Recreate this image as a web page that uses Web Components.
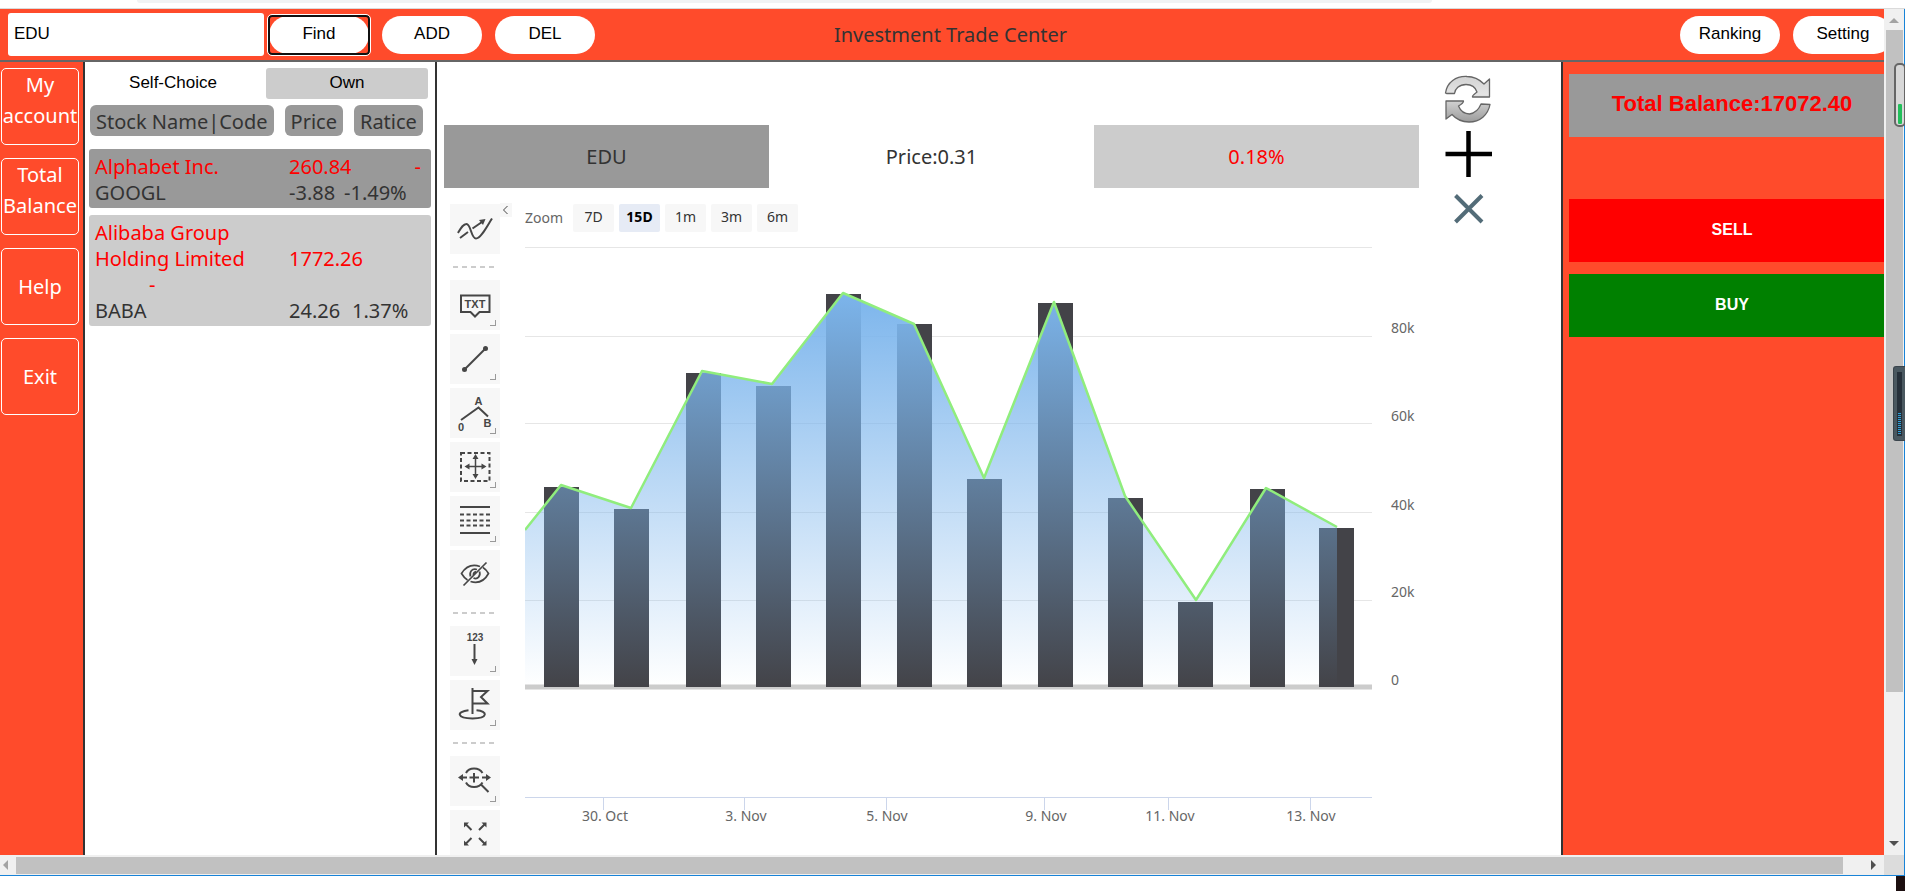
<!DOCTYPE html>
<html lang="en">
<head>
<meta charset="utf-8">
<title>Investment Trade Center</title>
<style>
  html, body { margin: 0; height: 100%; }
  body {
    overflow: hidden;
    background: #fff;
    color: #333;
    font: 20px/26px "Noto Sans", "Open Sans", sans-serif;
    --accent: #ff4b2b;
    --line: #333;
    --ui: "Liberation Sans", Arial, sans-serif;
  }
</style>
</head>
<body>
<window-frame>
  <trade-app></trade-app>
</window-frame>

<script>
const define = (name, html, setup) => {
  const template = document.createElement('template');
  template.innerHTML = html;
  customElements.define(name, class extends HTMLElement {
    constructor() {
      super();
      const root = this.attachShadow({ mode: 'open' });
      root.append(template.content.cloneNode(true));
      if (setup) setup.call(this, root);
    }
  });
};

/* Rounded white action button */
define('pill-button', `
<style>
  :host { display: block; position: relative; flex: none; width: 100px; height: 38px; }
  button { width: 100%; height: 100%; padding: 0 0 2px; border: 0; border-radius: 20px; background: #fff;
    color: #000; font: 17px/20px var(--ui); }
  :host([active])::after { content: ""; position: absolute; inset: -1px; border: 2px solid #101010;
    border-radius: 4px; outline: 1px solid #fff; pointer-events: none; }
</style>
<button type="button"><slot></slot></button>`);

define('top-bar', `
<style>
  :host { display: grid; grid-template-columns: 1fr auto 1fr; align-items: center; box-sizing: border-box;
    height: 53px; padding: 0 9px 0 8px; background: var(--accent); border-bottom: 2px solid #666; }
  .group { display: flex; align-items: center; gap: 13px; }
  .end { justify-content: flex-end; }
  input { box-sizing: border-box; width: 256px; height: 43px; margin-right: -8px; padding: 0 6px 2px; border: 0;
    border-radius: 3px; background: #fff; color: #000; font: 17px/20px var(--ui); }
  h1 { margin: 0; font-size: 20px; line-height: 26px; font-weight: 400; }
</style>
<div class="group">
  <input type="text" value="EDU" aria-label="Stock code">
  <pill-button active>Find</pill-button>
  <pill-button>ADD</pill-button>
  <pill-button>DEL</pill-button>
</div>
<h1>Investment Trade Center</h1>
<div class="group end">
  <pill-button>Ranking</pill-button>
  <pill-button>Setting</pill-button>
</div>`);

define('side-nav', `
<style>
  :host { display: block; flex: none; box-sizing: border-box; width: 85px; background: var(--accent);
    border-right: 2px solid var(--line); }
  nav { display: flex; flex-direction: column; gap: 13px; padding: 6px 4px 0 1px; }
  button { display: flex; justify-content: center; align-items: center; height: 77px; padding: 0;
    border: 1px solid #fff; border-radius: 5px; background: none; color: #fff; font: inherit; line-height: 31px; }
  .tall { align-items: flex-start; }
</style>
<nav>
  <button type="button" class="tall">My<br>account</button>
  <button type="button" class="tall">Total<br>Balance</button>
  <button type="button">Help</button>
  <button type="button">Exit</button>
</nav>`);

define('stock-list', `
<style>
  :host { display: block; flex: none; box-sizing: border-box; width: 352px; padding: 6px 4px;
    background: #fff; border-right: 2px solid var(--line); }
  .tabs { display: grid; grid-template-columns: 1fr 1fr; gap: 12px; padding: 0 3px; }
  .tabs button { height: 31px; padding: 0 0 2px; border: 0; border-radius: 3px; background: #fff; color: #000;
    font: 17px/20px var(--ui); }
  .tabs .own { background: #ccc; }
  table, thead, tbody { display: block; }
  thead tr { display: flex; gap: 11px; margin: 6px 0 13px 1px; }
  th { height: 31px; padding: 0 6px; border-radius: 6px; background: #999; font-weight: 400; line-height: 33px; white-space: nowrap; }
  tbody { margin-bottom: 7px; padding: 5px 6px 2px; border-radius: 3px; background: #ccc; }
  tbody.dark { background: #999; }
  tbody tr { display: grid; grid-template-columns: 194px 55px 1fr; }
  tbody.loose tr { grid-template-columns: 194px 63px 1fr; }
  td { padding: 0; white-space: nowrap; }
  .up td { color: #f00; }
  .low { padding-top: 26px; }
  .right { text-align: right; padding-right: 4px; }
  .dash { display: block; padding-left: 54px; }
</style>
<div class="tabs">
  <button type="button">Self-Choice</button>
  <button type="button" class="own">Own</button>
</div>
<table>
  <thead><tr><th>Stock Name|Code</th><th>Price</th><th>Ratice</th></tr></thead>
  <tbody class="dark">
    <tr class="up"><td>Alphabet Inc.</td><td>260.84</td><td class="right">-</td></tr>
    <tr><td>GOOGL</td><td>-3.88</td><td>-1.49%</td></tr>
  </tbody>
  <tbody class="loose">
    <tr class="up"><td>Alibaba Group<br>Holding Limited<span class="dash">-</span></td><td class="low">1772.26</td></tr>
    <tr><td>BABA</td><td>24.26</td><td>1.37%</td></tr>
  </tbody>
</table>`);

define('quote-bar', `
<style>
  :host { display: grid; grid-template-columns: 1fr 1fr 1fr; text-align: center; line-height: 63px; }
  .code { background: #999; }
  .rate { background: #ccc; color: #f00; }
</style>
<div class="code">EDU</div><div>Price:0.31</div><div class="rate">0.18%</div>`);

/* Square annotation button, with a corner mark where it opens a submenu */
define('tool-button', `
<style>
  :host { display: block; height: 50px; }
  button { display: block; position: relative; width: 50px; height: 50px; padding: 0; border: 0; background: #f7f7f7; }
  :host([menu]) button::after { content: ""; position: absolute; right: 4px; bottom: 4px; width: 5px; height: 5px;
    border: solid #999; border-width: 0 1px 1px 0; }
</style>
<button type="button"><slot></slot></button>`);

define('chart-tools', `
<style>
  :host { display: flex; flex: none; flex-direction: column; gap: 4px; position: relative; width: 50px; }
  hr { box-sizing: border-box; width: 41px; height: 2px; margin: 8px 0 8px 3px; border: 0;
    background: repeating-linear-gradient(90deg, #ccc 0 5px, transparent 5px 9px); }
  svg { display: block; width: 50px; height: 50px; fill: none; stroke: #464646; stroke-width: 2; }
  svg text, .solid { fill: #464646; stroke: none; }
  svg text { font: bold 11px var(--ui); text-anchor: middle; }
  .fold { position: absolute; left: 50px; top: -1px; width: 12px; height: 14px; padding: 0; border: 0; background: #f7f7f7; }
  .fold svg { width: 12px; height: 14px; stroke-width: 1; }
</style>
<tool-button><svg viewBox="0 0 50 50"><path d="M8 29C11 24 13 20 16.500 20C21 20 21 34.500 26 34.500C31 34.500 37 22 42 14.500M10 34L18 28M22.500 24.500L32 18"/><path class="solid" d="M35.500 15l-6.500 1 4 5z"/></svg></tool-button>
<hr>
<tool-button menu><svg viewBox="0 0 50 50"><path d="M11 15.500H39.500V32H29.500L25 36.500L20.500 32H11z"/><text x="25" y="28">TXT</text></svg></tool-button>
<tool-button menu><svg viewBox="0 0 50 50"><path d="M14.500 35.500L35.500 14.500"/><circle class="solid" cx="14.500" cy="35.500" r="2.500"/><circle class="solid" cx="35.500" cy="14.500" r="2.500"/></svg></tool-button>
<tool-button menu><svg viewBox="0 0 50 50"><path d="M11 32L28.500 19.500L38 28.500"/><text x="28.500" y="17">A</text><text x="11" y="43">0</text><text x="37.500" y="39">B</text></svg></tool-button>
<tool-button menu><svg viewBox="0 0 50 50"><path stroke-dasharray="4 2.500" d="M11 11H39.500V39H11z"/><path d="M25.500 15V35M17 24.500H34" stroke-width="1.500"/><path class="solid" d="M25.500 12l3 5h-6zM25.500 37l3-5h-6zM14.500 24.500l5-3v6zM36.500 24.500l-5-3v6z"/></svg></tool-button>
<tool-button menu><svg viewBox="0 0 50 50"><path d="M10 11H40M10 37H40"/><path stroke-dasharray="4 2.500" d="M10 18.500H40M10 24.500H40M10 29.500H40"/></svg></tool-button>
<tool-button><svg viewBox="0 0 50 50" style="stroke-width:1.700"><path d="M30 16.500C21 13.500 15 18 11.500 23.500C13 26 15 28.500 17.500 30M20.500 31.500C29 34 35 30 38.500 23.500C37 21 35.500 19 33 17.500M27 19.500C22 18 19 22 20.500 26.500M23.500 28C27.500 30 31 26 29.500 21.500M26 21.500C24 22 23 23.500 23.500 25M13.500 35.500L36.500 12.500"/></svg></tool-button>
<hr>
<tool-button menu><svg viewBox="0 0 50 50"><text x="25" y="15" style="font-size:10px">123</text><path d="M24.500 18V35"/><path class="solid" d="M21.500 33h6l-3 6z"/></svg></tool-button>
<tool-button menu><svg viewBox="0 0 50 50"><path d="M22.500 8V34M22.500 11H37.500L31 17L37.500 23.500H22.500"/><path d="M18.500 30.200C6 31.500 6.500 38.500 22.500 38.500C38.500 38.500 38 31 26.500 30.200"/></svg></tool-button>
<hr>
<tool-button menu><svg viewBox="0 0 50 50"><path d="M16 17C19 11 29 11 32.500 17M16 26.500C19 32.500 29 32.500 32.500 26.500M30.500 28L38.500 36M24 17V26.500M19.500 21.500H29M10 21.500H17M32 21.500H39"/><path class="solid" d="M8 21.500l5-3.500v7zM41 21.500l-5-3.500v7z"/></svg></tool-button>
<tool-button><svg viewBox="0 0 50 50"><path d="M16 14.500L21.500 20M34.500 14.500L29 20M16 33.500L21.500 28M34.500 33.500L29 28"/><path class="solid" d="M14 12.500h5l-5 5zM36.500 12.500h-5l5 5zM14 35.500h5l-5-5zM36.500 35.500h-5l5-5z"/></svg></tool-button>
<button type="button" class="fold" aria-label="Hide tools"><svg viewBox="0 0 12 14"><path d="M7.500 3L3.500 7L7.500 11"/></svg></button>`);

/* Column series with an area and a line drawn over it */
define('price-chart', `
<style>
  :host { display: block; flex: 1; min-width: 0; font-size: 14px; line-height: 18px; }
  .ranges { display: flex; align-items: center; gap: 5px; height: 28px; color: #666; }
  .ranges span { width: 43px; }
  .ranges button { width: 41px; height: 28px; padding: 0 0 2px; border: 0; border-radius: 2px; background: #f7f7f7;
    color: #333; font: inherit; }
  .ranges .on { background: #e6ebf5; color: #000; font-weight: 700; }
  svg { display: block; width: 100%; height: auto; }
  text { fill: #666; font-size: 14px; }
  .x { text-anchor: middle; }
</style>
<div class="ranges"><span>Zoom</span>
  <button type="button">7D</button><button type="button" class="on">15D</button><button type="button">1m</button><button type="button">3m</button><button type="button">6m</button>
</div>
<svg viewBox="0 0 894 620" role="img" aria-label="Daily volume">
  <defs><linearGradient id="fade" gradientUnits="userSpaceOnUse" x1="0" y1="61" x2="0" y2="455">
    <stop offset="0" stop-color="#7cb5ec"/><stop offset="1" stop-color="#7cb5ec" stop-opacity="0"/>
  </linearGradient></defs>
  <path d="M0 15.500H847M0 104.500H847M0 191.500H847M0 280.500H847M0 368.500H847" stroke="#e6e6e6"/>
  <path d="M0 455H847" stroke="#ccc" stroke-width="5"/>
  <g class="bars" fill="#434348"></g>
  <path class="area" fill="url(#fade)"/>
  <path class="line" fill="none" stroke="#90ed7d" stroke-width="2.500" stroke-linejoin="round"/>
  <path d="M0 565.500H847M78.500 565V578M219.500 565V578M361.500 565V578M519.500 565V578M643.500 565V578M785.500 565V578" stroke="#ccd6eb" fill="none"/>
  <g class="labels"></g>
</svg>`, function (root) {
  const svg = root.querySelector('svg');
  const add = (parent, tag, attrs, text) => {
    const el = document.createElementNS('http://www.w3.org/2000/svg', tag);
    for (const k in attrs) el.setAttribute(k, attrs[k]);
    if (text) el.textContent = text;
    parent.append(el);
  };
  const bars = [[19,255],[89,277],[161,141],[231,154],[301,62],[372,92],[442,247],[513,71],[583,266],[653,370],[725,257],[794,296]];
  for (const [x, y] of bars) add(svg.querySelector('.bars'), 'rect', { x, y, width: 35, height: 455 - y });
  const points = [[0,298],[36,253],[106,276],[177,139],[247,152],[318,61],[389,92],[459,246],[529,70],[600,264],[671,368],[741,256],[812,295]];
  const d = 'M' + points.map(p => p.join(' ')).join('L');
  svg.querySelector('.line').setAttribute('d', d);
  svg.querySelector('.area').setAttribute('d', d + 'V455H0Z');
  const labels = svg.querySelector('.labels');
  [['30. Oct',80],['3. Nov',221],['5. Nov',362],['9. Nov',521],['11. Nov',645],['13. Nov',786]]
    .forEach(([t, x]) => add(labels, 'text', { x, y: 589, class: 'x' }, t));
  [['80k',101],['60k',189],['40k',278],['20k',365],['0',453]]
    .forEach(([t, y]) => add(labels, 'text', { x: 866, y }, t));
});

define('market-view', `
<style>
  :host { display: flex; flex: 1; min-width: 0; padding-left: 7px; background: #fff; border-right: 2px solid var(--line); }
  .main { flex: 1; min-width: 0; padding-top: 63px; }
  .chart { display: flex; gap: 25px; padding: 16px 0 0 6px; }
  aside { display: flex; flex: none; flex-direction: column; gap: 8px; box-sizing: border-box; width: 142px; padding: 13px 0 0 25px; }
  aside button { width: 48px; height: 48px; padding: 0; border: 0; background: none; }
  svg { display: block; width: 48px; height: 48px; }
</style>
<div class="main">
  <quote-bar></quote-bar>
  <div class="chart"><chart-tools></chart-tools><price-chart></price-chart></div>
</div>
<aside>
  <button type="button" aria-label="Refresh"><svg viewBox="0 0 48 48">
    <defs><linearGradient id="metal" gradientUnits="userSpaceOnUse" x1="0" y1="0" x2="0" y2="48"><stop offset="0" stop-color="#d2d2d2"/><stop offset=".400" stop-color="#e4e4e4"/><stop offset=".550" stop-color="#d0d0d0"/><stop offset="1" stop-color="#999"/></linearGradient></defs>
    <g fill="url(#metal)" stroke="#666" stroke-width="1.300" stroke-linejoin="round">
      <path d="M1.500 18C3 7 12 1 23 1.500C31 1.500 36 5 40 9L45.500 4V22H28.500C28 20.500 29 20 33 17C31 11 26 9.500 22 9.500C15 9.500 11 14 10.500 18.500H2.500z"/>
      <path d="M46 29.500C44 40 36 47 25 47C17 47 12 44 8 39.500L2 44V26H19.500C19.500 28 18 29 14.500 31C17 37 21 39 25.500 39C32 38 35 34 37 29z"/>
    </g></svg></button>
  <button type="button" aria-label="Add"><svg viewBox="0 0 48 48"><path d="M1.500 23H48M24.500 0V46" stroke="#000" stroke-width="4.500"/></svg></button>
  <button type="button" aria-label="Close"><svg viewBox="0 0 48 48"><path d="M11.500 8.500L38 35M38 8.500L11.500 35" stroke="#536c78" stroke-width="4"/></svg></button>
</aside>`);

define('trade-panel', `
<style>
  :host { display: flex; flex: none; flex-direction: column; gap: 12px; box-sizing: border-box; width: 339px;
    padding: 12px 7px 0 6px; background: var(--accent); font-family: var(--ui); }
  h2 { margin: 0 0 50px; background: #999; color: #f00; font-size: 22px; line-height: 59px; padding-bottom: 4px; text-align: center; }
  button { height: 63px; padding: 0 0 2px; border: 0; background: #f00; color: #fff; font: bold 16px/20px var(--ui); }
  .buy { background: #008000; }
</style>
<h2>Total Balance:17072.40</h2>
<button type="button">SELL</button>
<button type="button" class="buy">BUY</button>`);

define('trade-app', `
<style>
  :host { display: flex; flex-direction: column; height: 100%; }
  .row { display: flex; flex: 1; min-height: 0; }
</style>
<top-bar></top-bar>
<div class="row">
  <side-nav></side-nav><stock-list></stock-list><market-view></market-view><trade-panel></trade-panel>
</div>`);

/* Browser window edges: scroll bars and the strips above and below the page */
define('window-frame', `
<style>
  :host { display: grid; position: relative; box-sizing: border-box; height: 100vh; overflow: hidden;
    grid-template: 9px minmax(0, 1fr) 21px 15px / minmax(0, 1fr) 21px; background: #fff; }
  .top { grid-column: 1 / 3; box-sizing: border-box; border-bottom: 1px solid #dadada; }
  .address { width: 68%; height: 3px; margin-left: 137px; border-radius: 0 0 12px 12px; background: #f1f3f4; }
  .page { overflow: hidden; }
  .content { width: calc(100% + 18px); height: 100%; }
  .bar { display: flex; box-sizing: border-box; align-items: center; background: #f0f0f0; }
  .v { flex-direction: column; border-right: 1px solid #1883d7; padding: 9px 0; }
  .h { border-bottom: 1px solid #1883d7; padding: 0 8px 0 3px; }
  .v i { flex: none; width: 17px; height: 80%; margin: 7px 0 auto 1px; background: #c1c1c1; }
  .h i { flex: none; width: calc(100% - 46px); height: 17px; margin: 0 auto 0 8px; background: #c1c1c1; }
  .bar svg { flex: none; display: block; }
  .corner { background: #dcdcdc; border: solid #1883d7; border-width: 0 1px 1px 0; }
  .bottom { display: flex; grid-column: 1 / 3; justify-content: flex-end; }
  .bottom i { width: 9px; background: #1c0f10; }
  .gauge, .meter { position: absolute; right: 0; display: block; }
  .gauge { top: 63px; } .meter { top: 366px; }
</style>
<div class="top"><div class="address"></div></div>
<div class="page"><div class="content"><slot></slot></div></div>
<div class="bar v">
  <svg width="10" height="5"><path d="M5 0L10 5H0z" fill="#a3a3a3"/></svg><i></i>
  <svg width="10" height="5"><path d="M0 0H10L5 5z" fill="#505050"/></svg>
</div>
<div class="bar h">
  <svg width="5" height="10"><path d="M5 0V10L0 5z" fill="#a3a3a3"/></svg><i></i>
  <svg width="5" height="10"><path d="M0 0V10L5 5z" fill="#505050"/></svg>
</div>
<div class="corner"></div>
<div class="bottom"><i></i></div>
<svg class="gauge" width="11" height="64"><rect x="1" y="1" width="10" height="62" rx="4" fill="#d8d8d8" stroke="#666" stroke-width="2"/><rect x="4" y="41" width="4" height="20" rx="1" fill="#22bf5b"/></svg>
<svg class="meter" width="12" height="75"><rect width="16" height="75" rx="3" fill="#3a444c"/><rect x="1" y="1" width="14" height="73" rx="2" fill="#4a5860"/><rect x="4" y="6" width="5" height="64" fill="#26303a"/><path d="M6.500 47V69" stroke="#2f9fd8" stroke-width="3" stroke-dasharray="1 1"/></svg>`);
</script>
</body>
</html>
